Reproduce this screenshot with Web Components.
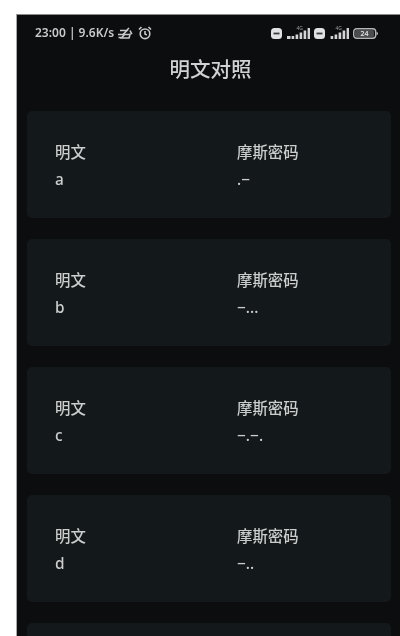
<!DOCTYPE html>
<html lang="zh">
<head>
<meta charset="utf-8">
<title>明文对照</title>
<style>
  html, body { margin: 0; height: 636px; overflow: hidden; background: #fff; }
  body { padding: 14px 0 0 16px; box-sizing: border-box; font-family: "Noto Sans", "Noto Sans CJK SC", sans-serif; }
</style>
</head>
<body>
<phone-screen>
  <status-bar></status-bar>
  <app-title>明文对照</app-title>
  <morse-card letter="a" code=".−"></morse-card>
  <morse-card letter="b" code="−..."></morse-card>
  <morse-card letter="c" code="−.−."></morse-card>
  <morse-card letter="d" code="−.."></morse-card>
  <morse-card></morse-card>
</phone-screen>
<script>
class PhoneScreen extends HTMLElement {
  constructor() {
    super();
    this.attachShadow({ mode: "open" });
  }

  connectedCallback() {
    this.shadowRoot.innerHTML = `
    <style>
    :host {
      display: flex;
      flex-direction: column;
      height: 622px;
      overflow: hidden;
      background: #0c0d0f;
      border-top: 1px solid #8b8b8b;
      border-left: 1px solid #a8a8a8;
      box-sizing: border-box;
    }
    </style>
    <slot></slot>
    `;
  }
}

class StatusBar extends HTMLElement {
  constructor() {
    super();
    this.attachShadow({ mode: "open" });
  }

  signal(net, width) {
    const bars = [[8, 3], [6.5, 4.5], [4.5, 6.5], [2.5, 8.5], [0, 11]]
      .map(([y, h], i) => `<rect x="${width - 18.4 + i * 4}" y="${y}" width="2.6" height="${h}"/>`)
      .join("");
    return `
    <span class="signal">
      <span class="net">${net}</span>
      <svg width="${width}" height="11" viewBox="0 0 ${width} 11" fill="#d4d4d4">
        ${width > 19 ? '<rect x="0" y="8" width="3.5" height="3"/>' : ""}
        ${bars}
      </svg>
    </span>`;
  }

  connectedCallback() {
    const sim = `
    <svg width="11" height="11" viewBox="0 0 11 11">
      <rect width="11" height="11" rx="3.5" fill="#e2e2e2"/>
      <rect x="2.5" y="4.6" width="6" height="1.8" fill="#3a3c3e"/>
    </svg>`;
    this.shadowRoot.innerHTML = `
    <style>
    :host {
      display: flex;
      flex: none;
      align-items: center;
      justify-content: space-between;
      height: 14px;
      margin: 11px 22px 0 18px;
      color: #c9c9c9;
      font: 600 12px/14px "Noto Sans", "Noto Sans CJK SC", sans-serif;
      filter: blur(0.6px);
    }
    .side { display: flex; align-items: center; }
    .time { white-space: nowrap; margin-right: 3px; }
    .alarm { margin-left: 5px; }
    .signal { position: relative; display: flex; margin: 0 4px 0 5px; }
    .net { position: absolute; right: 7px; top: -3px; font-size: 5px; line-height: 6px; color: #9a9a9a; font-weight: 400; }
    .battery { position: relative; display: flex; }
    .level {
      position: absolute;
      left: 2px;
      top: 2px;
      width: 19px;
      height: 7px;
      background: #4a4c4e;
      border-radius: 1.5px;
      font-size: 7px;
      line-height: 7px;
      text-align: center;
      color: #e0e0e0;
    }
    </style>
    <div class="side">
      <span class="time">23:00 | 9.6K/s</span>
      <svg width="16" height="14" viewBox="0 0 16 14" fill="none" stroke="#c9c9c9" stroke-width="1.6">
        <path d="M3 4.5h6.5l2.5-2.5M6 11.5h-4.500M13 4.500l1.500 3-2 1h-5l-3 3.500h7.500l1-3M1 8.500h5l5-5"/>
      </svg>
      <svg class="alarm" width="14" height="14" viewBox="0 0 14 14" fill="none" stroke="#c9c9c9" stroke-width="1.600">
        <circle cx="7" cy="7.800" r="4.800"/>
        <path d="M7 5v3l1.800 1M1 3.500 3.500 1M13 3.500 10.500 1"/>
      </svg>
    </div>
    <div class="side">
      ${sim}${this.signal("4G", 23)}${sim}${this.signal("4G", 19)}
      <span class="battery">
        <svg width="25" height="11" viewBox="0 0 25 11" fill="none">
          <rect x="0.7" y="0.7" width="22" height="9.600" rx="3" stroke="#b5b5b5" stroke-width="1.400"/>
          <path d="M23.500 3.800c1 .3 1.500 1 1.500 1.700s-.5 1.400-1.500 1.700z" fill="#b5b5b5"/>
        </svg>
        <span class="level">24</span>
      </span>
    </div>
    `;
  }
}

class AppTitle extends HTMLElement {
  constructor() {
    super();
    this.attachShadow({ mode: "open" });
  }

  connectedCallback() {
    this.shadowRoot.innerHTML = `
    <style>
    :host {
      display: block;
      flex: none;
      height: 71px;
      box-sizing: border-box;
      padding: 11px 0 0 4px;
      text-align: center;
      color: #d2d2d2;
      font: 500 20.5px/34px "Noto Sans CJK SC", sans-serif;
      filter: blur(0.6px);
    }
    </style>
    <slot></slot>
    `;
  }
}

class MorseCard extends HTMLElement {
  constructor() {
    super();
    this.attachShadow({ mode: "open" });
  }

  connectedCallback() {
    // the last card only peeks in at the bottom, it has no rows
    const letter = this.getAttribute("letter");
    const rows = letter === null ? "" : `
    <div>明文</div>
    <div>摩斯密码</div>
    <div>${letter}</div>
    <div>${this.getAttribute("code")}</div>
    `;
    this.shadowRoot.innerHTML = `
    <style>
    :host {
      display: grid;
      grid-template-columns: 182px 1fr;
      flex: none;
      align-content: start;
      row-gap: 5px;
      height: 107px;
      box-sizing: border-box;
      margin: 0 9px 21px 10px;
      padding: 31px 28px 0;
      background: #13181a;
      border-radius: 5px;
      color: #cdcdcd;
      font: 500 15.4px/22px "Noto Sans", "Noto Sans CJK SC", sans-serif;
    }
    div { filter: blur(0.6px); }
    </style>
    ${rows}
    `;
  }
}

window.customElements.define("phone-screen", PhoneScreen);
window.customElements.define("status-bar", StatusBar);
window.customElements.define("app-title", AppTitle);
window.customElements.define("morse-card", MorseCard);
</script>
</body>
</html>
